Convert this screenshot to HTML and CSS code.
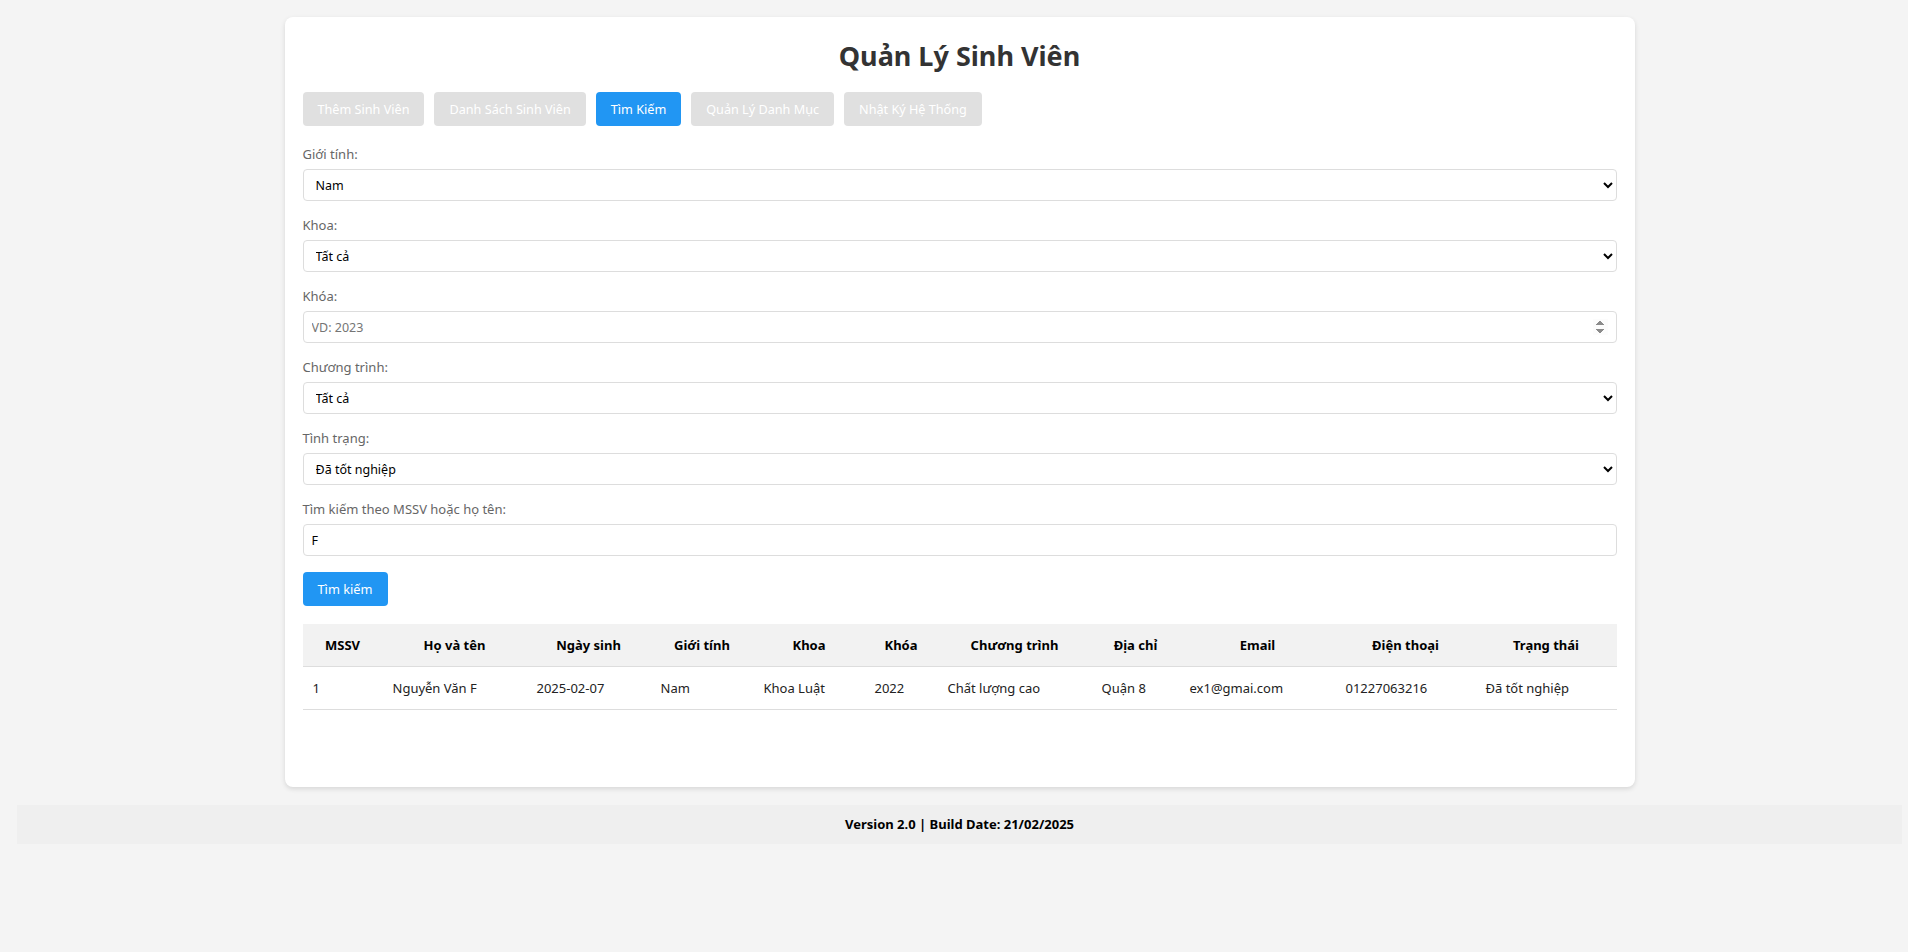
FILE: index.html
```html
<!DOCTYPE html>
<html lang="vi">
<head>
<meta charset="utf-8">
<title>Quản Lý Sinh Viên</title>
<link rel="stylesheet" href="styles.css">
</head>
<body>
<div class="card">
  <h1 class="title">Quản Lý Sinh Viên</h1>
  <nav class="tabs">
    <button class="tab">Thêm Sinh Viên</button>
    <button class="tab">Danh Sách Sinh Viên</button>
    <button class="tab active">Tìm Kiếm</button>
    <button class="tab">Quản Lý Danh Mục</button>
    <button class="tab">Nhật Ký Hệ Thống</button>
  </nav>
  <form class="search-form">
    <div class="form-group">
      <label class="label">Giới tính:</label>
      <select class="control"><option>Nam</option></select>
    </div>
    <div class="form-group">
      <label class="label">Khoa:</label>
      <select class="control"><option>Tất cả</option></select>
    </div>
    <div class="form-group">
      <label class="label">Khóa:</label>
      <input class="control" type="number" placeholder="VD: 2023">
    </div>
    <div class="form-group">
      <label class="label">Chương trình:</label>
      <select class="control"><option>Tất cả</option></select>
    </div>
    <div class="form-group">
      <label class="label">Tình trạng:</label>
      <select class="control"><option>Đã tốt nghiệp</option></select>
    </div>
    <div class="form-group">
      <label class="label">Tìm kiếm theo MSSV hoặc họ tên:</label>
      <input class="control" type="text" value="F">
    </div>
    <button type="button" class="btn-primary">Tìm kiếm</button>
  </form>
  <table class="results">
    <colgroup>
      <col class="c1"><col class="c2"><col class="c3"><col class="c4"><col class="c5"><col class="c6">
      <col class="c7"><col class="c8"><col class="c9"><col class="c10"><col class="c11">
    </colgroup>
    <thead>
      <tr>
        <th>MSSV</th><th>Họ và tên</th><th>Ngày sinh</th><th>Giới tính</th><th>Khoa</th><th>Khóa</th>
        <th>Chương trình</th><th>Địa chỉ</th><th>Email</th><th>Điện thoại</th><th>Trạng thái</th>
      </tr>
    </thead>
    <tbody>
      <tr>
        <td>1</td><td>Nguyễn Văn F</td><td>2025-02-07</td><td>Nam</td><td>Khoa Luật</td><td>2022</td>
        <td>Chất lượng cao</td><td>Quận 8</td><td>ex1@gmai.com</td><td>01227063216</td><td>Đã tốt nghiệp</td>
      </tr>
    </tbody>
  </table>
</div>
<footer class="footer">Version 2.0 | Build Date: 21/02/2025</footer>
</body>
</html>
```
FILE: styles.css
```css
* { box-sizing: border-box; }

html, body {
  background: #f4f4f4;
}

body {
  margin: 0;
  padding: 17px 6px 0 17px;
  font-family: "Segoe UI", "Noto Sans", sans-serif;
  color: #333;
}

.card {
  width: 1350px;
  margin: 0 auto;
  background: #fff;
  border-radius: 8px;
  box-shadow: 0 2px 5px rgba(0, 0, 0, 0.12);
  padding: 19px 18px 18px;
}

.title {
  margin: 0 0 16px;
  text-align: center;
  font-size: 27px;
  line-height: 40px;
  font-weight: 700;
  color: #333;
}

.tabs {
  display: flex;
  gap: 10px;
  margin-bottom: 19px;
}

.tab {
  height: 34px;
  padding: 0 15px;
  border: none;
  border-radius: 4px;
  background: #e0e0e0;
  color: #fff;
  font-family: inherit;
  font-size: 12.65px;
  cursor: pointer;
}

.tab.active {
  background: #2196f3;
}

.form-group {
  margin-bottom: 15px;
}

.label {
  display: block;
  font-size: 13px;
  line-height: 19px;
  margin-bottom: 5px;
  color: #666;
}

.control {
  display: block;
  width: 100%;
  height: 32px;
  padding: 0 8px;
  border: 1px solid #ddd;
  border-radius: 4px;
  background: #fff;
  font-family: inherit;
  font-size: 12.5px;
  color: #000;
}

.control::placeholder {
  color: #757575;
}

.control::-webkit-inner-spin-button,
.control::-webkit-outer-spin-button {
  opacity: 1;
}

.btn-primary {
  display: block;
  height: 34px;
  padding: 0 15px;
  margin-top: 16px;
  border: none;
  border-radius: 4px;
  background: #2196f3;
  color: #fff;
  font-family: inherit;
  font-size: 12.8px;
  cursor: pointer;
}

.results {
  width: 100%;
  table-layout: fixed;
  border-collapse: collapse;
  margin-top: 18px;
  margin-bottom: 59px;
  font-size: 13px;
}

.results .c1 { width: 80px; }
.results .c2 { width: 144px; }
.results .c3 { width: 124px; }
.results .c4 { width: 103px; }
.results .c5 { width: 111px; }
.results .c6 { width: 73px; }
.results .c7 { width: 154px; }
.results .c8 { width: 88px; }
.results .c9 { width: 156px; }
.results .c10 { width: 140px; }
.results .c11 { width: 141px; }

.results th,
.results td {
  padding: 12px 10px;
  line-height: 18px;
  border-bottom: 1px solid #ddd;
  white-space: nowrap;
  color: #000;
}

.results th {
  background: #f2f2f2;
  font-weight: 700;
  text-align: center;
}

.results td {
  text-align: left;
  color: #222;
}

.footer {
  margin-top: 18px;
  background: #efefef;
  padding: 10px;
  line-height: 19px;
  text-align: center;
  font-size: 13px;
  font-weight: 700;
  color: #000;
}
```
